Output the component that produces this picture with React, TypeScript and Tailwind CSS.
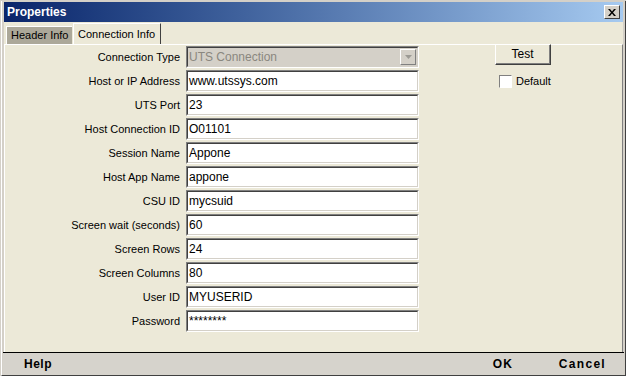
import { ReactNode } from "react";

const fields: { label: string; value: string }[] = [
  { label: "Host or IP Address", value: "www.utssys.com" },
  { label: "UTS Port", value: "23" },
  { label: "Host Connection ID", value: "O01101" },
  { label: "Session Name", value: "Appone" },
  { label: "Host App Name", value: "appone" },
  { label: "CSU ID", value: "mycsuid" },
  { label: "Screen wait (seconds)", value: "60" },
  { label: "Screen Rows", value: "24" },
  { label: "Screen Columns", value: "80" },
  { label: "User ID", value: "MYUSERID" },
  { label: "Password", value: "********" },
];

const Sunken = ({ children, className }: { children: ReactNode; className?: string }) => (
  <div className="border border-t-[#808080] border-l-[#808080] border-b-white border-r-white">
    <div
      className={`border border-t-[#404040] border-l-[#404040] border-b-[#d4d0c8] border-r-[#d4d0c8] ${className ?? ""}`}
    >
      {children}
    </div>
  </div>
);

const FieldRow = ({ label, children }: { label: string; children: ReactNode }) => (
  <div className="flex items-center h-[22px] mb-[2px]">
    <span className="w-[176px] pr-[1px] text-right text-[11px] text-black">{label}</span>
    <div className="ml-[5px] w-[233px]">{children}</div>
  </div>
);

const App = () => {
  return (
    <div
      className="w-[626px] h-[376px] flex flex-col bg-[#d4d0c8] border-t border-l border-t-[#d4d0c8] border-l-[#d4d0c8] overflow-hidden"
      style={{ fontFamily: '"Liberation Sans", Arial, sans-serif' }}
    >
      <div className="flex flex-col flex-1 border-l border-r border-b border-l-white border-r-[#404040] border-b-[#404040] px-[1px] pt-[1px]">
        {/* title bar */}
        <div className="h-[20px] mx-[1px] flex items-center justify-between bg-gradient-to-r from-[#0a246a] to-[#a6caf0] pl-[3px] pr-[3px]">
          <span className="text-white text-[12px] font-bold">Properties</span>
          <button className="w-[16px] h-[14px] bg-[#d4d0c8] border border-t-white border-l-white border-b-[#404040] border-r-[#404040] flex items-center justify-center">
            <svg width="8" height="7" viewBox="0 0 8 7">
              <path d="M0 0h2l2 2.5L6 0h2L5 3.5 8 7H6L4 4.5 2 7H0l3-3.5z" fill="#000" />
            </svg>
          </button>
        </div>

        {/* tabs */}
        <div className="flex items-end h-[22px] pl-[2px] bg-[#ece9d8] mx-[1px]">
          <div className="h-[18px] w-[66px] bg-[#aca899] border-t border-l border-t-white border-l-white flex items-center pl-[4px] text-[11px] text-black">
            Header Info
          </div>
          <div className="h-[21px] w-[88px] ml-[1px] bg-[#ece9d8] border-t border-l border-r border-t-white border-l-white border-r-[#404040] flex items-center pl-[4px] text-[11px] text-black">
            Connection Info
          </div>
        </div>

        {/* panel */}
        <div className="flex-1 mx-[1px] bg-[#ece9d8] border-t border-l border-r border-t-white border-l-white border-r-[#808080] flex pt-[1px]">
          <div className="flex flex-col">
            <FieldRow label="Connection Type">
              <Sunken className="bg-[#d4d0c8] h-[20px] flex items-center justify-between">
                <span className="pl-[1px] text-[12px] text-[#8a877f]">UTS Connection</span>
                <div className="w-[16px] h-[16px] mr-[1px] border border-t-white border-l-white border-b-[#808080] border-r-[#808080] bg-[#d4d0c8] flex items-center justify-center">
                  <svg width="7" height="4" viewBox="0 0 7 4">
                    <path d="M0 0h7L3.5 4z" fill="#9c9a94" />
                  </svg>
                </div>
              </Sunken>
            </FieldRow>
            {fields.map((f) => (
              <FieldRow key={f.label} label={f.label}>
                <Sunken className="bg-white h-[20px] flex items-center">
                  <span className="pl-[1px] text-[12px] text-black">{f.value}</span>
                </Sunken>
              </FieldRow>
            ))}
          </div>

          <div className="ml-[76px] flex flex-col">
            <button className="-mt-[2px] w-[56px] h-[21px] bg-[#ece9d8] border border-t-white border-l-white border-b-[#404040] border-r-[#404040] text-[12px] text-black">
              <span className="block border-b border-r border-b-[#808080] border-r-[#808080] h-full leading-[18px]">Test</span>
            </button>
            <label className="flex items-center mt-[8px] ml-[4px] text-[11px] text-black">
              <span className="w-[13px] h-[13px] bg-white border border-t-[#808080] border-l-[#808080] border-b-white border-r-white" />
              <span className="ml-[4px]">Default</span>
            </label>
          </div>
        </div>

        {/* bottom bar */}
        <div className="h-[23px] border-t border-t-black bg-[#d6d3cc] flex items-center text-[12px] font-bold text-black">
          <span className="ml-[21px] tracking-[0.5px]">Help</span>
          <span className="ml-auto tracking-[1px]">OK</span>
          <span className="ml-[46px] mr-[18px] tracking-[1.3px]">Cancel</span>
        </div>
      </div>
    </div>
  );
};

export default App;
